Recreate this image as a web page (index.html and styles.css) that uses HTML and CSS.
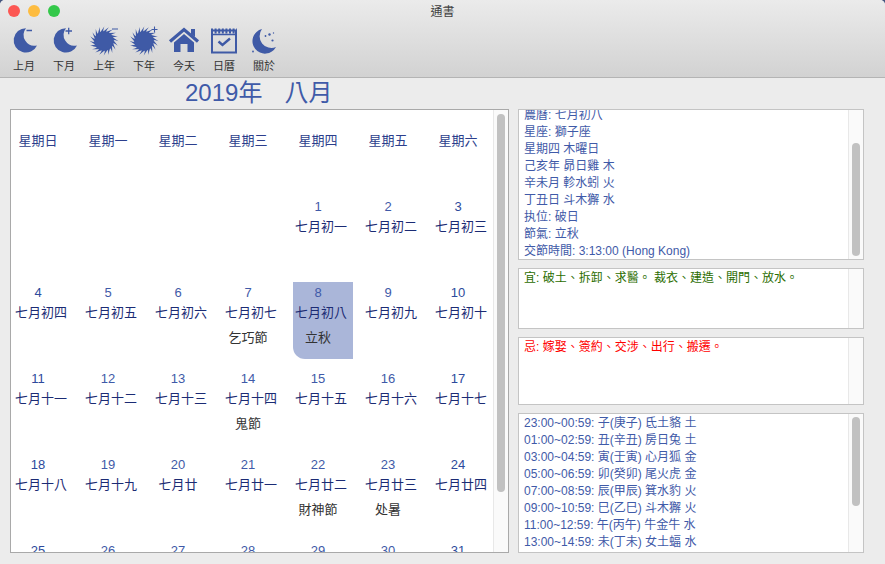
FILE: index.html
```html
<!DOCTYPE html>
<html lang="zh-Hant">
<head>
<meta charset="utf-8">
<title>通書</title>
<link rel="stylesheet" href="styles.css">
</head>
<body>
<div class="app">
  <header class="header">
    <div class="titlebar">
      <div class="lights"><span class="light red"></span><span class="light yellow"></span><span class="light green"></span></div>
      <div class="title">通書</div>
      <div></div>
    </div>
    <div class="toolbar">
      <div class="tool">
        <svg class="icon" viewBox="0 0 40 30"><path class="fill" d="M22 2.200A12.200 12.200 0 1 0 33 19.400A10.800 10.800 0 0 1 22 2.200Z"/><path class="line" d="M22.500 4.500H28"/></svg>
        <span>上月</span>
      </div>
      <div class="tool">
        <svg class="icon" viewBox="0 0 40 30"><path class="fill" d="M22 2.200A12.200 12.200 0 1 0 33 19.400A10.800 10.800 0 0 1 22 2.200Z"/><path class="line" d="M21.500 5H28M24.700 1.700V8.300"/></svg>
        <span>下月</span>
      </div>
      <div class="tool">
        <svg class="icon" viewBox="0 0 40 30">
          <defs>
            <path id="blade" d="M18.800 6Q21.500 3.700 24.800 1.300Q22.800 3.600 21.800 6.400Z"/>
            <g id="blades4"><use href="#blade"/><use href="#blade" transform="rotate(18 20 15)"/><use href="#blade" transform="rotate(36 20 15)"/><use href="#blade" transform="rotate(54 20 15)"/></g>
            <g id="swirl"><circle cx="20" cy="15" r="9.800"/><use href="#blades4"/><use href="#blades4" transform="rotate(72 20 15)"/><use href="#blades4" transform="rotate(144 20 15)"/><use href="#blades4" transform="rotate(216 20 15)"/><use href="#blades4" transform="rotate(288 20 15)"/></g>
          </defs>
          <use class="fill" href="#swirl"/><path class="thin" d="M28 3H34"/>
        </svg>
        <span>上年</span>
      </div>
      <div class="tool">
        <svg class="icon" viewBox="0 0 40 30"><use class="fill" href="#swirl"/><path class="thin" d="M27.500 3.500H33.500M30.500 .5V6.500"/></svg>
        <span>下年</span>
      </div>
      <div class="tool">
        <svg class="icon" viewBox="0 0 40 30"><path class="roof" d="M6 15.500L20 3.500L34 15.500"/><path class="fill" d="M27 3H31V11L27 8ZM10 16.500L20 8L30 16.500V26H23.500V18H16.500V26H10Z"/></svg>
        <span>今天</span>
      </div>
      <div class="tool">
        <svg class="icon" viewBox="0 0 40 30"><rect class="frame" x="8" y="4.500" width="24" height="22"/><path class="ticks" d="M7 5H33"/><path class="rule" d="M8 8.500H32"/><path class="check" d="M14.500 15.500L18.500 19L26 12.500"/></svg>
        <span>日曆</span>
      </div>
      <div class="tool">
        <svg class="icon" viewBox="0 0 40 30"><path class="fill" d="M18 3A12.500 12.500 0 1 0 32 21A11.800 11.800 0 0 1 18 3Z"/><circle class="fill" cx="25.500" cy="8.500" r="1.200"/><circle class="fill" cx="21.500" cy="10" r=".9"/><circle class="fill" cx="28.500" cy="14.500" r="1.100"/><circle class="fill" cx="29.500" cy="7" r=".7"/><circle class="fill" cx="9" cy="25.500" r=".9"/></svg>
        <span>關於</span>
      </div>
    </div>
  </header>
  <h1 class="heading"><span>2019年</span><span>八月</span></h1>
  <main class="main">
    <section class="panel calendar">
      <div class="content grid">
        <div class="cell week">星期日</div><div class="cell week">星期一</div><div class="cell week">星期二</div><div class="cell week">星期三</div><div class="cell week">星期四</div><div class="cell week">星期五</div><div class="cell week">星期六</div>
        <div class="cell"></div><div class="cell"></div><div class="cell"></div><div class="cell"></div>
        <div class="cell"><b>1</b><i>七月初一</i></div><div class="cell"><b>2</b><i>七月初二</i></div><div class="cell"><b class="end">3</b><i>七月初三</i></div>
        <div class="cell"><b class="end">4</b><i>七月初四</i></div><div class="cell"><b>5</b><i>七月初五</i></div><div class="cell"><b>6</b><i>七月初六</i></div><div class="cell"><b>7</b><i>七月初七</i><em>乞巧節</em></div><div class="cell today"><b>8</b><i>七月初八</i><em>立秋</em></div><div class="cell"><b>9</b><i>七月初九</i></div><div class="cell"><b class="end">10</b><i>七月初十</i></div>
        <div class="cell"><b class="end">11</b><i>七月十一</i></div><div class="cell"><b>12</b><i>七月十二</i></div><div class="cell"><b>13</b><i>七月十三</i></div><div class="cell"><b>14</b><i>七月十四</i><em>鬼節</em></div><div class="cell"><b>15</b><i>七月十五</i></div><div class="cell"><b>16</b><i>七月十六</i></div><div class="cell"><b class="end">17</b><i>七月十七</i></div>
        <div class="cell"><b class="end">18</b><i>七月十八</i></div><div class="cell"><b>19</b><i>七月十九</i></div><div class="cell"><b>20</b><i class="short">七月廿</i></div><div class="cell"><b>21</b><i>七月廿一</i></div><div class="cell"><b>22</b><i>七月廿二</i><em>財神節</em></div><div class="cell"><b>23</b><i>七月廿三</i><em>处暑</em></div><div class="cell"><b class="end">24</b><i>七月廿四</i></div>
        <div class="cell"><b class="end">25</b></div><div class="cell"><b>26</b></div><div class="cell"><b>27</b></div><div class="cell"><b>28</b></div><div class="cell"><b>29</b></div><div class="cell"><b>30</b></div><div class="cell"><b class="end">31</b></div>
      </div>
      <div class="track"><div class="thumb cal-thumb"></div></div>
    </section>
    <aside class="side">
      <section class="panel info">
        <div class="content text scrolled">
          <p>農曆: 七月初八</p><p>星座: 獅子座</p><p>星期四 木曜日</p><p>己亥年 昴日雞 木</p><p>辛未月 軫水蚓 火</p><p>丁丑日 斗木獬 水</p><p>执位: 破日</p><p>節氣: 立秋</p><p>交節時間: 3:13:00 (Hong Kong)</p>
        </div>
        <div class="track"><div class="thumb info-thumb"></div></div>
      </section>
      <section class="panel good">
        <div class="content text green-text"><p>宜: 破土、拆卸、求醫。 裁衣、建造、開門、放水。</p></div>
        <div class="track"></div>
      </section>
      <section class="panel bad">
        <div class="content text red-text"><p>忌: 嫁娶、簽約、交涉、出行、搬遷。</p></div>
        <div class="track"></div>
      </section>
      <section class="panel hours">
        <div class="content text">
          <p>23:00~00:59: 子(庚子) 氐土貉 土</p><p>01:00~02:59: 丑(辛丑) 房日兔 土</p><p>03:00~04:59: 寅(壬寅) 心月狐 金</p><p>05:00~06:59: 卯(癸卯) 尾火虎 金</p><p>07:00~08:59: 辰(甲辰) 箕水豹 火</p><p>09:00~10:59: 巳(乙巳) 斗木獬 火</p><p>11:00~12:59: 午(丙午) 牛金牛 水</p><p>13:00~14:59: 未(丁未) 女土蝠 水</p>
        </div>
        <div class="track"><div class="thumb hours-thumb"></div></div>
      </section>
    </aside>
  </main>
</div>
</body>
</html>
```

FILE: styles.css
```css
* { box-sizing: border-box; }
html, body { margin: 0; height: 564px; overflow: hidden; background: #44557f; }
body { font-family: "Liberation Sans", "Noto Sans CJK TC", sans-serif; }
.app { height: 564px; background: #ececec; border-radius: 5px 5px 0 0; overflow: hidden; }

.header { height: 78px; background: linear-gradient(#ebebeb, #d2d2d2); border-bottom: 1px solid #b4b4b4; }
.titlebar { height: 22px; display: grid; grid-template-columns: 1fr auto 1fr; align-items: center; }
.lights { display: flex; gap: 8px; padding-left: 8px; }
.light { width: 12px; height: 12px; border-radius: 50%; }
.red { background: #fc5753; }
.yellow { background: #fdbc40; }
.green { background: #34c84a; }
.title { font-size: 12px; color: #404040; padding-bottom: 2px; }

.toolbar { display: flex; padding: 4px 0 0 4px; }
.tool { width: 40px; display: flex; flex-direction: column; align-items: center; }
.tool span { font-size: 11px; line-height: 14px; color: #333; margin-top: 3px; }
.icon { width: 40px; height: 30px; display: block; }
.fill { fill: #3f5aa6; }
.line { stroke: #3f5aa6; stroke-width: 1.3; fill: none; }
.thin { stroke: #3f5aa6; stroke-width: 1.1; fill: none; }
.roof { fill: none; stroke: #3f5aa6; stroke-width: 3.2; }
.frame { fill: none; stroke: #3f5aa6; stroke-width: 2; }
.ticks { fill: none; stroke: #3f5aa6; stroke-width: 5; stroke-dasharray: 2 1.6; }
.rule { fill: none; stroke: #3f5aa6; stroke-width: 1.6; }
.check { fill: none; stroke: #3f5aa6; stroke-width: 2.4; }

.heading { margin: 0; height: 31px; padding-left: 185px; display: flex; gap: 22px; font-size: 24px; font-weight: 400; line-height: 30px; color: #3f5aa8; }

.main { display: flex; gap: 9px; padding-left: 10px; }
.panel { display: flex; background: #fff; border: 1px solid #c4c4c4; overflow: hidden; }
.content { flex: 1; min-width: 0; overflow: hidden; }
.track { width: 15px; flex: none; padding-left: 3px; background: #fafafa; border-left: 1px solid #e8e8e8; }
.thumb { width: 8px; background: #c1c1c1; border-radius: 4px; }

.calendar { width: 499px; height: 444px; border-color: #a9a9a9; }
.cal-thumb { height: 378px; margin-top: 4px; }
.info-thumb { height: 113px; margin-top: 33px; }
.hours-thumb { height: 89px; margin-top: 3px; }

.grid { display: grid; grid-template-columns: repeat(7, 60px); grid-auto-rows: 76px; gap: 10px; padding: 1px 0 0 2px; align-content: start; }
.cell { padding-right: 10px; text-align: center; white-space: nowrap; font-size: 13px; }
.cell b, .cell i, .cell em { display: block; font-style: normal; font-weight: 400; line-height: 20px; }
.cell b { color: #3f5aa8; }
.cell b.end { color: #2d4a9c; }
.cell i { color: #1b2b74; margin-left: 2px; width: 52px; }
.cell i.short { margin-left: 0; width: auto; }
.cell em { color: #333; margin-top: 5px; }
.week { padding-top: 20px; line-height: 20px; color: #2c3e8c; }
.today { background: #aab6d9; border-bottom-left-radius: 12px; margin-top: -1px; padding-top: 1px; }

.side { width: 346px; display: flex; flex-direction: column; gap: 8px; }
.info { height: 151px; }
.good { height: 61px; }
.bad { height: 68px; }
.hours { height: 140px; }
.text { padding: 1px 0 0 5px; font-size: 12px; line-height: 17px; color: #3f5aa8; }
.text p { margin: 0; white-space: nowrap; }
.scrolled p:first-child { margin-top: -4px; }
.green-text { color: #2b6d00; }
.red-text { color: #ff0000; }
```
